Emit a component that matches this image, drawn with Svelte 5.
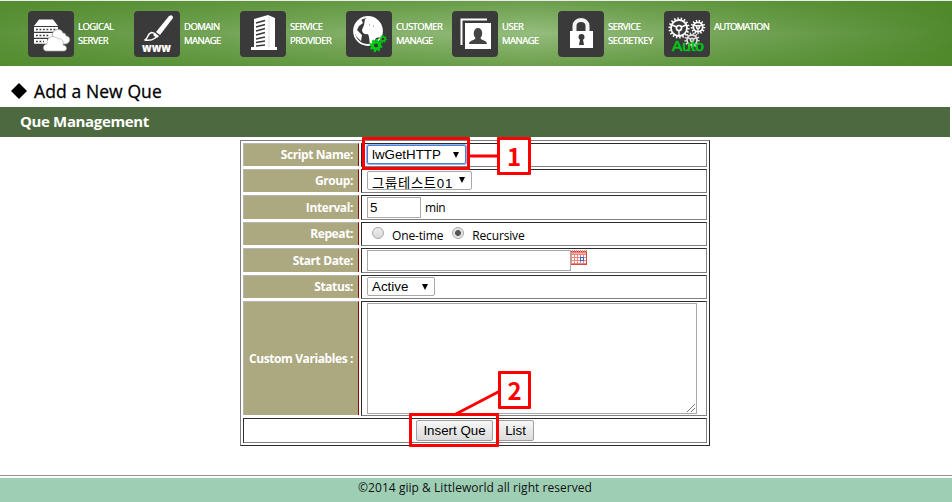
<script>
  const nav = [
    { id: 'server', lines: ['LOGICAL', 'SERVER'] },
    { id: 'domain', lines: ['DOMAIN', 'MANAGE'] },
    { id: 'provider', lines: ['SERVICE', 'PROVIDER'] },
    { id: 'customer', lines: ['CUSTOMER', 'MANAGE'] },
    { id: 'user', lines: ['USER', 'MANAGE'] },
    { id: 'secret', lines: ['SERVICE', 'SECRETKEY'] },
    { id: 'auto', lines: ['AUTOMATION'] }
  ];
  let repeat = $state('recursive');
</script>

{#snippet gear(cx, cy, r, color, teeth)}
  <g stroke={color} fill="none">
    <circle {cx} {cy} r={r} stroke-width="1.8" />
    <circle {cx} {cy} r={r + 1.5} stroke-width="2.2" pathLength={teeth * 2} stroke-dasharray=".9 1.1" />
    <circle {cx} {cy} r={r * 0.32} stroke-width="1.6" />
    <path d="M{cx} {cy + r * 0.3}v{r * 0.7}M{cx - r * 0.3} {cy - 1}l{-r * 0.55} {-r * 0.25}M{cx + r * 0.3} {cy - 1}l{r * 0.55} {-r * 0.25}" stroke-width="1.4" />
  </g>
{/snippet}

{#snippet icon(id)}
  <svg class="icon" viewBox="0 0 46 46" width="46" height="46">
    <rect width="46" height="46" rx="4" fill="#3a3a3a" />
    {#if id === 'server'}
      <path d="M11 8.500h14l5 6.500H6z" fill="#fff" />
      <path d="M6 16h24v4.800H6zM6 22h20v4.800H6zM6 28h13v4.800H6z" fill="#fff" />
      <path d="M8 18.500h20M8 24.500h14M8 30.500h8" stroke="#3a3a3a" stroke-width="1.600" stroke-dasharray="1.800 1.700" />
      <path d="M24 24c1-6 9-8 11-2 2 0 3 1 3 3 5 0 5 7 0 8h-8z" fill="#fff" stroke="#999" stroke-width=".8" />
      <path d="M18 40c-4-1-3-7 1-7-1-7 7-10 11-5 4-1 6 2 5 6 5 1 4 6 1 6z" fill="#fff" stroke="#aaa" stroke-width=".7" />
    {:else if id === 'domain'}
      <path d="M22 21 35 5q4-2 4 2L26 24z" fill="#fff" />
      <path d="m21 22 4 3-2 2-4-3z" fill="#fff" />
      <path d="M10.500 29c4-1 2-6 7-7.500 4 0 6 4 3 6-3 2-6 2-10 1.500z" fill="none" stroke="#fff" stroke-width="1.500" />
      <text x="8" y="41" textLength="29" lengthAdjust="spacingAndGlyphs" font-family="Open Sans, sans-serif" font-size="13" font-weight="800" fill="#fff">www</text>
    {:else if id === 'provider'}
      <path d="M14 8 28 4l7 3v29h2v3H11v-3h3z" fill="#fff" />
      <path d="M29 6v30" stroke="#ddd" />
      <path d="m16 12 9-2.500M16 16l9-2.500M16 20l9-2.500M16 24l9-2.500M16 28l9-2M16 31.500l9-1.500M16 35l9-1" stroke="#3a3a3a" stroke-width="1.700" />
    {:else if id === 'customer'}
      <circle cx="22" cy="20" r="14" fill="#3a3a3a" stroke="#fff" stroke-width="1.800" />
      <path d="M22 6c9 0 15 7 14 15l-2 5-4 1-3 6-3 1-1-8-1-3c-3 1-6-1-6-4l2-5 1-6z" fill="#fff" />
      <path d="M15 8c-6 4-8 11-5 17l5 5 1-6-5-5 2-4 4-3z" fill="#fff" />
      <path d="M23 14h1m3 1h1" stroke="#777" />
      <circle cx="30" cy="34.500" r="3.600" fill="#3a3a3a" stroke="#0c1" stroke-width="3" />
      <circle cx="30" cy="34.500" r="5.500" fill="none" stroke="#0c1" stroke-width="1.900" pathLength="16" stroke-dasharray="1.100 .9" />
      <circle cx="37" cy="28" r="2.100" fill="#3a3a3a" stroke="#0c1" stroke-width="1.500" />
      <circle cx="37" cy="28" r="3.200" fill="none" stroke="#0c1" stroke-width="1.200" pathLength="16" stroke-dasharray="1 1" />
    {:else if id === 'user'}
      <path d="M9.500 34V8.500H35" fill="none" stroke="#fff" stroke-width="2" />
      <path d="M13 12h26v26H13z" fill="#fff" />
      <path d="M17 33c0-4 6-3.500 6.500-6-3-3-2-10 2.500-10s5.500 7 2.500 10c.5 2.500 6.500 2 6.500 6z" fill="#444" />
    {:else if id === 'secret'}
      <path d="M16.500 20v-5c0-8 13-8 13 0v5" fill="none" stroke="#f5f5f5" stroke-width="4" />
      <path d="M12 20h23v17H12z" fill="#fff" />
      <circle cx="23.500" cy="26" r="3" fill="#3a3a3a" />
      <path d="M22.500 26h2l1.500 8h-5z" fill="#3a3a3a" />
    {:else}
      {@render gear(15, 17, 8, '#fff', 18)}
      {@render gear(34, 16, 4.7, '#fff', 13)}
      {@render gear(28, 29, 5, '#ddd', 13)}
      <text x="8" y="39.500" textLength="32" lengthAdjust="spacingAndGlyphs" font-family="Liberation Sans, sans-serif" font-size="14" stroke="#00c814" stroke-width=".6" fill="#00c814">Auto</text>
    {/if}
  </svg>
{/snippet}

<div class="page">
  <header>
    {#each nav as item}
      <a class="item {item.id}">
        {@render icon(item.id)}
        <span class="caption">
          {#each item.lines as line}<span>{line}</span>{/each}
        </span>
      </a>
    {/each}
  </header>

  <h1>
    <svg width="16" height="16" viewBox="0 0 16 16"><path d="M8 0l8 8-8 8-8-8z" fill="#000" /></svg>
    <span>Add a New Que</span>
  </h1>
  <h2><span>Que Management</span></h2>

  <form class="table">
    <div class="label"><span>Script Name:</span></div>
    <div class="cell">
      <div class="select focus s1"><span>lwGetHTTP</span><i></i></div>
    </div>
    <div class="label"><span>Group:</span></div>
    <div class="cell">
      <div class="select s2"><span>그룹테스트01</span><i></i></div>
    </div>
    <div class="label"><span>Interval:</span></div>
    <div class="cell">
      <input class="interval" value="5" />
      <span class="min">min</span>
    </div>
    <div class="label"><span>Repeat:</span></div>
    <div class="cell radios">
      <label><input type="radio" value="once" bind:group={repeat} /><span>One-time</span></label>
      <label><input type="radio" value="recursive" bind:group={repeat} /><span>Recursive</span></label>
    </div>
    <div class="label"><span>Start Date:</span></div>
    <div class="cell">
      <input class="date" />
      <svg class="cal" width="16" height="15" viewBox="0 0 16 15" shape-rendering="crispEdges">
        <path d="M0 0h16v15H0z" fill="#f0857b" />
        <path d="M0 .5h16" stroke="#fff" stroke-dasharray="1 1" />
        <path d="M0 1.500h16" stroke="#b33" stroke-dasharray="1 1" />
        <path d="M1 3.500h14" stroke="#f8b0a8" />
        <path d="M1 5h2v2H1zM4 5h2v2H4zM7 5h2v2H7zM10 5h2v2h-2zM13 5h2v2h-2zM1 8h2v2H1zM4 8h2v2H4zM7 8h2v2H7zM13 8h2v2h-2zM1 11h2v2H1zM4 11h2v2H4zM7 11h2v2H7zM10 11h2v2h-2zM13 11h2v2h-2z" fill="#fff" />
        <path d="M9.500 7.500h3v3h-3z" fill="#fff" stroke="#2867d8" />
        <path d="M0 14.500h16M15.500 2v13" stroke="#d24b45" />
      </svg>
    </div>
    <div class="label"><span>Status:</span></div>
    <div class="cell">
      <div class="select s3"><span>Active</span><i></i></div>
    </div>
    <div class="label"><span>Custom Variables :</span></div>
    <div class="cell">
      <div class="area">
        <svg width="8" height="8" viewBox="0 0 8 8"><path d="M0 8 8 0M4 8l4-4" stroke="#777" fill="none" /></svg>
      </div>
    </div>
    <div class="cell actions">
      <button type="button" class="insert">Insert Que</button>
      <button type="button" class="list">List</button>
    </div>
  </form>

  <footer><span>©2014 giip &amp; Littleworld all right reserved</span></footer>

  <svg class="lines" width="952" height="502">
    <path d="M469 156h30M455 414.500l44-23" stroke="#f00" stroke-width="3" fill="none" />
  </svg>
  <div class="mark frame1"></div>
  <div class="mark num num1">1</div>
  <div class="mark frame2"></div>
  <div class="mark num num2">2</div>
</div>

<style>
  :global(body) { background: #fff; }
  .page {
    position: relative; width: 952px; height: 502px; overflow: hidden;
    display: flex; flex-direction: column;
    font-family: "Open Sans", "Noto Sans CJK KR", sans-serif; color: #000;
  }
  header {
    box-sizing: border-box; height: 66px; flex: none; border-top: 1px solid #ececec;
    padding: 10px 0 0 28px; display: flex;
    background: linear-gradient(rgba(74,135,35,.55), rgba(74,135,35,0) 50%, rgba(74,135,35,.55)), linear-gradient(90deg, #5c933b, #95bd7e 56%, #528a30);
  }
  .item { width: 106px; display: flex; gap: 4px; flex: none; }
  .icon { display: block; flex: none; }
  .caption {
    display: flex; flex-direction: column; padding-top: 9px; white-space: nowrap;
    font-size: 9.5px; line-height: 14px; letter-spacing: -.5px; color: #fff;
    text-shadow: 0 0 .5px #fff;
  }
  .auto .caption { letter-spacing: -.75px; }
  h1 {
    margin: 0; height: 41px; box-sizing: border-box; padding: 1px 0 0 11px; flex: none;
    display: flex; align-items: center; font-size: 17.5px; font-weight: 500;
  }
  h1 svg { margin: 8px 7px 0 0; }
  h1 span { line-height: 24px; margin-top: 7px; letter-spacing: .1px; -webkit-text-stroke: .3px #000; }
  h2 {
    margin: 0; width: 950px; height: 30px; flex: none; box-sizing: border-box; padding-left: 20px;
    background: #4d693f; color: #fff; font-size: 15px; line-height: 29px; font-weight: 700;
  }
  h2 span { letter-spacing: -.36px; }
  .table {
    box-sizing: border-box; width: 470px; height: 306px; flex: none; margin: 3px 0 0 240px; padding: 2px;
    border: 1px solid; border-color: #808080 #2c2c2c #2c2c2c #808080;
    display: grid; grid-template-columns: 116px 346px; gap: 2px;
    grid-template-rows: 24px 24px 25px 24px 25px 24px 115px 25px;
  }
  .label {
    box-sizing: border-box; margin-bottom: 1px; background: #aca880; color: #fff;
    border-top: 1px solid #b5b5b5; border-left: 1px solid #b5b5b5; border-right: 1px solid #900;
    padding: 0 5px 1px 0; display: flex; align-items: center; justify-content: flex-end;
    font-size: 12px; font-weight: 700; white-space: nowrap; letter-spacing: -.4px;
  }
  .cell {
    box-sizing: border-box; border: 1px solid; border-color: #2c2c2c #808080 #808080 #2c2c2c;
    padding: 1px 5px 0; display: flex; align-items: flex-start; min-width: 0;
    font-size: 12px; white-space: nowrap;
  }
  .select, input, .area, button {
    box-sizing: border-box; margin: 0; font: 13.333px "Liberation Sans", "Noto Sans CJK KR", sans-serif;
  }
  .select {
    height: 19px; border: 1px solid #a9a9a9; border-radius: 2px; padding: 0 6px 0 4px;
    display: flex; align-items: center; justify-content: space-between; overflow: hidden; background: #fff;
  }
  .select span { line-height: 17px; }
  .select i { border: 3.5px solid transparent; border-top: 6px solid #000; border-bottom: 0; }
  .focus { border-color: #4d7fd0; box-shadow: 0 0 0 1px #8fb4f0; }
  .s1 { width: 99px; }
  .s2 { width: 105px; align-items: flex-start; }
  .s2 span { padding-top: 3px; letter-spacing: .7px; }
  .s2 i { margin-top: 5px; }
  .s3 { width: 68px; }
  input:not([type="radio"]) { border: 1px solid #a9a9a9; height: 21px; padding: 0 2px; outline: 0; }
  .interval { width: 54px; }
  .min { margin: 2px 0 0 4px; letter-spacing: -.4px; }
  .date { width: 204px; }
  .radios { padding-left: 10px; gap: 9px; }
  .radios label { display: flex; }
  .radios input {
    appearance: none; width: 12px; height: 12px; margin-top: 3px; border: 1px solid #aaa; border-radius: 50%;
    background: linear-gradient(#eee, #d9d9d9);
  }
  .radios input:checked { background: radial-gradient(circle, #555 0 2.6px, #e4e4e4 3.3px); }
  .radios span { margin: 3px 0 0 8px; letter-spacing: -.15px; }
  .area { position: relative; width: 330px; height: 111px; border: 1px solid #a9a9a9; }
  .area svg { position: absolute; right: 1px; bottom: 1px; }
  .actions { grid-column: 1 / 3; justify-content: center; padding: 1px 0 0; gap: 4px; }
  button {
    height: 21px; padding: 0; border: 1px solid #a0a0a0; border-radius: 2px;
    background: linear-gradient(#f6f6f6, #dcdcdc); color: #000;
  }
  .insert { width: 77px; }
  .list { width: 37px; }
  footer {
    position: relative; margin-top: 32px; height: 24px; flex: none; background: #9ecfb5;
    text-align: center; font-size: 12px; line-height: 20px; color: #111;
  }
  footer span { letter-spacing: .04px; margin-right: 2px; }
  footer::before { content: ""; position: absolute; left: 0; right: 0; top: -3px; height: 1px; background: #909090; }
  .lines { position: absolute; left: 0; top: 0; pointer-events: none; }
  .mark { position: absolute; box-sizing: border-box; border: 3px solid #f00; border-radius: 1px; }
  .frame1 { left: 362px; top: 137px; width: 108px; height: 33px; }
  .frame2 { left: 409px; top: 413px; width: 90px; height: 34px; }
  .num {
    background: #fff; color: #f00; width: 34px; height: 38px; display: flex; align-items: center;
    justify-content: center; font: 700 24px "Noto Sans CJK KR", sans-serif; line-height: 32px;
  }
  .num1 { left: 497px; top: 137px; }
  .num2 { left: 498px; top: 371px; width: 33px; }
</style>
